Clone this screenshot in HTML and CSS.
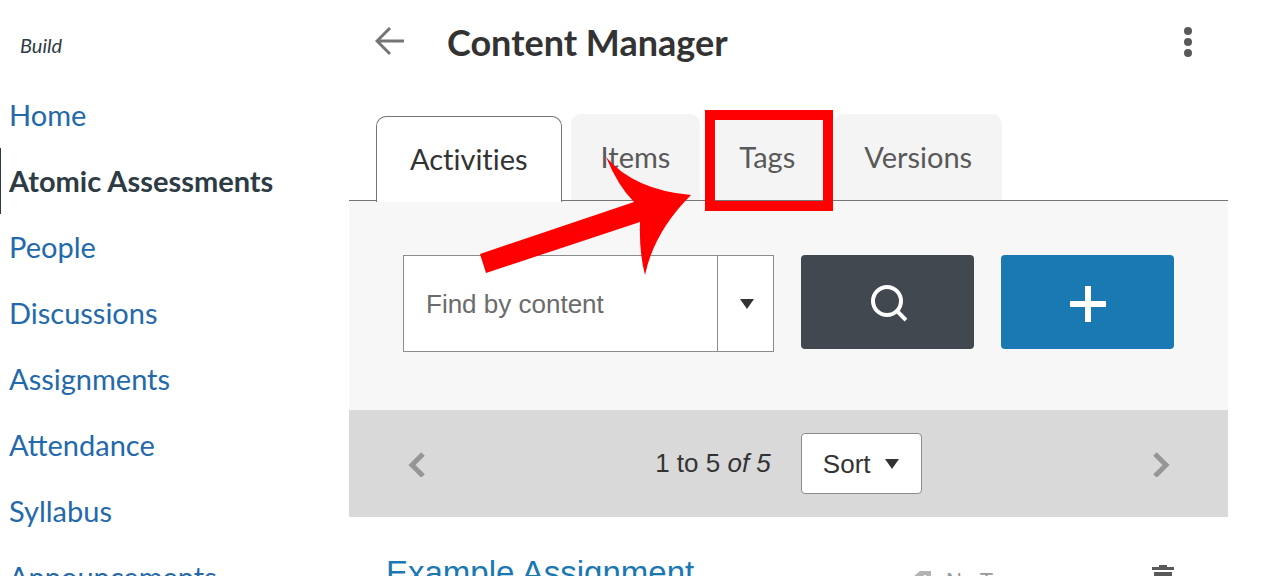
FILE: index.html
```html
<!DOCTYPE html>
<html lang="en">

<head>
    <meta charset="UTF-8">
    <meta name="viewport" content="width=device-width, initial-scale=1.0">
    <title>Content Manager</title>
    <link rel="stylesheet" href="styles.css">
</head>

<body>

    <div class="page">
        <nav class="sidebar">
            <p class="term">Build</p>
            <a class="nav-link" href="#">Home</a>
            <a class="nav-link active" href="#">Atomic Assessments</a>
            <a class="nav-link" href="#">People</a>
            <a class="nav-link" href="#">Discussions</a>
            <a class="nav-link" href="#">Assignments</a>
            <a class="nav-link" href="#">Attendance</a>
            <a class="nav-link" href="#">Syllabus</a>
            <a class="nav-link" href="#">Announcements</a>
        </nav>

        <main class="content">
            <header class="header">
                <button class="icon-btn" aria-label="Back">
                    <svg width="30" height="30" viewBox="0 0 30 30" fill="none" stroke="#757575" stroke-width="3">
                        <path d="M15 1L2 14l13 13M2 14h27" />
                    </svg>
                </button>
                <h1>Content Manager</h1>
                <button class="icon-btn" aria-label="More options">
                    <svg width="8" height="30" viewBox="0 0 8 30" fill="#595959">
                        <circle cx="4" cy="4" r="4" />
                        <circle cx="4" cy="15" r="4" />
                        <circle cx="4" cy="26" r="4" />
                    </svg>
                </button>
            </header>

            <div class="tabs">
                <button class="tab selected">Activities</button>
                <button class="tab">Items</button>
                <div class="marked">
                    <button class="tab">Tags</button>
                </div>
                <button class="tab">Versions</button>
            </div>

            <form class="search">
                <div class="search-box">
                    <input type="text" placeholder="Find by content" aria-label="Find by content">
                    <button type="button" class="search-menu" aria-label="Search options">
                        <svg width="14" height="10" viewBox="0 0 14 10" fill="#333333"><path d="M0 0h14L7 10z" /></svg>
                    </button>
                </div>
                <button type="button" class="btn dark" aria-label="Search">
                    <svg width="38" height="38" viewBox="0 0 38 38" fill="none" stroke="#ffffff" stroke-width="4">
                        <circle cx="18" cy="16" r="14" />
                        <path d="M27 25l10 10" />
                    </svg>
                </button>
                <button type="button" class="btn blue" aria-label="Add">
                    <svg width="38" height="38" viewBox="0 0 38 38" fill="none" stroke="#ffffff" stroke-width="6">
                        <path d="M19 1v36M1 19h36" />
                    </svg>
                </button>
            </form>

            <div class="pager">
                <button class="icon-btn" aria-label="Previous page">
                    <svg width="18" height="26" viewBox="0 0 18 26" fill="none" stroke="#969696" stroke-width="5">
                        <path d="M16 3L5 14l11 11" />
                    </svg>
                </button>
                <div class="pager-middle">
                    <span>1 to 5 <em>of 5</em></span>
                    <div class="sort">
                        <select aria-label="Sort">
                            <option>Sort</option>
                        </select>
                        <svg width="14" height="10" viewBox="0 0 14 10" fill="#333333"><path d="M0 0h14L7 10z" /></svg>
                    </div>
                </div>
                <button class="icon-btn" aria-label="Next page">
                    <svg width="18" height="26" viewBox="0 0 18 26" fill="none" stroke="#969696" stroke-width="5">
                        <path d="M3 3l11 11L3 25" />
                    </svg>
                </button>
            </div>

            <div class="row">
                <a class="row-title" href="#">Example Assignment</a>
                <span class="row-tags">
                    <svg width="20" height="20" viewBox="0 0 20 20" fill="#b3b3b3" fill-rule="evenodd">
                        <path d="M7 0h11v11L9 20 0 10V6zM12 4a2 2 0 1 0 0 4 2 2 0 0 0 0-4z" />
                    </svg>
                    No Tags
                </span>
                <button class="icon-btn" aria-label="Delete">
                    <svg width="22" height="28" viewBox="0 0 22 28" fill="#595959">
                        <path d="M7 0h8v2h7v3H0V2h7zM2 7h18v19q0 2-2 2H4q-2 0-2-2z" />
                    </svg>
                </button>
            </div>

            <svg class="pointer" width="212" height="120" viewBox="0 0 212 120" fill="#ff0000">
                <path d="M0 97L154 45Q138 29 126 0Q154 33 211 38Q174 75 165 118Q159 95 160 65L6 116z" />
            </svg>
        </main>
    </div>

</body>

</html>
```

FILE: styles.css
```css
* {
    box-sizing: border-box;
}

body {
    margin: 0;
    height: 100vh;
    overflow: hidden;
    background-color: #ffffff;
    color: #333333;
    font-family: Lato, "Liberation Sans", sans-serif;
}

button {
    border: none;
    padding: 0;
    font-family: inherit;
    cursor: pointer;
}

svg {
    display: block;
}

.page {
    display: flex;
}

/* sidebar */

.sidebar {
    width: 349px;
    flex-shrink: 0;
}

.term {
    margin: 0;
    padding: 31px 20px 23px;
    color: #2d3b45;
    font-size: 20px;
    line-height: 28px;
    font-style: italic;
}

.nav-link {
    display: block;
    padding-left: 8px;
    border-left: 1px solid transparent;
    color: #2369ab;
    font-size: 29px;
    line-height: 66px;
    text-decoration: none;
}

.nav-link.active {
    border-left-color: #2d3b45;
    color: #2d3b45;
    font-weight: bold;
}

/* main column */

.content {
    position: relative;
    flex: 1;
    min-width: 0;
    margin-right: 54px;
}

.header {
    display: flex;
    align-items: center;
    height: 84px;
    padding: 0 36px 0 26px;
}

.header h1 {
    flex: 1;
    margin: 0 0 0 42px;
    font-size: 36px;
    line-height: 44px;
}

.icon-btn {
    background: none;
}

.tabs {
    display: flex;
    align-items: flex-end;
    gap: 9px;
    margin-top: 30px;
    padding-left: 27px;
    border-bottom: 1px solid #757575;
}

.tab {
    display: block;
    height: 86px;
    padding: 0 30px 2px;
    border-radius: 10px 10px 0 0;
    background-color: #f4f4f4;
    color: #595959;
    font-size: 29px;
    font-variant-ligatures: none;
}

.tab.selected {
    margin-bottom: -2px;
    padding: 0 33px 2px;
    border: 1px solid #757575;
    border-bottom: none;
    background-color: #ffffff;
    color: #333333;
}

.marked {
    position: relative;
}

.marked::after {
    content: "";
    position: absolute;
    inset: -4px -8px -11px -4px;
    border: 10px solid #ff0000;
}

.search {
    display: flex;
    gap: 27px;
    height: 209px;
    padding: 54px 54px 0;
    background-color: #f7f7f7;
}

.search-box {
    display: flex;
    flex: 1;
    min-width: 0;
    height: 97px;
    border: 1px solid #8c8c8c;
    background-color: #ffffff;
}

.search-box input {
    flex: 1;
    min-width: 0;
    padding: 2px 22px 0;
    border: none;
    font-family: "Liberation Sans", sans-serif;
    font-size: 26px;
}

.search-box input::placeholder {
    color: #6b6b6b;
}

.search-menu {
    display: grid;
    place-items: center;
    width: 56px;
    padding-left: 2px;
    border-left: 1px solid #8c8c8c;
    background: none;
}

.btn {
    display: grid;
    place-items: center;
    width: 173px;
    height: 94px;
    border-radius: 4px;
    padding-top: 4px;
}

.btn.dark {
    background-color: #41484f;
}

.btn.blue {
    background-color: #1a78b3;
}

.pager {
    display: flex;
    align-items: center;
    justify-content: space-between;
    height: 107px;
    padding: 0 58px;
    background-color: #d9d9d9;
    font-family: "Liberation Sans", sans-serif;
    font-size: 26px;
}

.pager-middle {
    display: flex;
    align-items: center;
    gap: 30px;
}

.sort {
    display: grid;
    align-items: center;
}

.sort select,
.sort svg {
    grid-area: 1 / 1;
}

.sort select {
    appearance: none;
    width: 121px;
    height: 61px;
    padding: 0 21px;
    border: 1px solid #8c8c8c;
    border-radius: 4px;
    background-color: #ffffff;
    color: #333333;
    font-family: inherit;
    font-size: inherit;
}

.sort svg {
    justify-self: end;
    margin-right: 23px;
    pointer-events: none;
}

.row {
    display: flex;
    align-items: flex-start;
    padding: 36px 54px 36px 37px;
    font-family: "Liberation Sans", sans-serif;
}

.row-title {
    flex: 1;
    color: #1a78b3;
    font-size: 33px;
    line-height: 40px;
    text-decoration: none;
}

.row-tags {
    display: flex;
    align-items: center;
    gap: 13px;
    width: 239px;
    padding-top: 14px;
    color: #999999;
    font-size: 22px;
    line-height: 28px;
}

.row .icon-btn {
    padding-top: 12px;
}

/* arrow drawn over the tabs and the search form */

.pointer {
    position: absolute;
    top: 157px;
    left: 131px;
    pointer-events: none;
}
```
